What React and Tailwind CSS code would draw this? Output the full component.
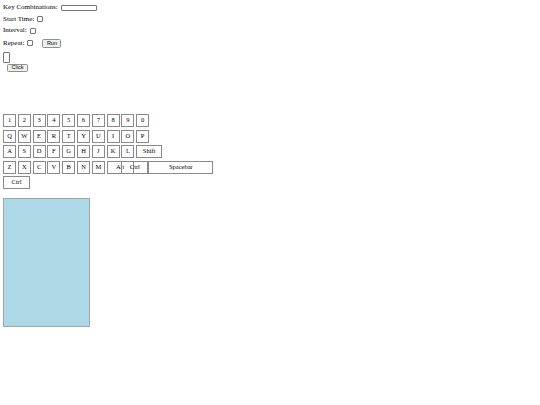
import React from "react";

const serif = { fontFamily: '"Liberation Serif", "Times New Roman", serif' };

function Key({ label, w = "w-[13px]", extra = "", bg = "bg-white" }) {
  return (
    <div
      className={`h-[13px] ${w} ${extra} ${bg} shrink-0 border border-[#8a8a8a] flex items-center justify-center text-[6.5px] text-black leading-none`}
    >
      {label}
    </div>
  );
}

function Row({ children }) {
  return <div className="flex gap-[1.8px]">{children}</div>;
}

function Check() {
  return <div className="w-[6px] h-[6px] border border-[#767676] rounded-[1px] bg-white" />;
}

function Btn({ children, extra = "" }) {
  return (
    <div
      className={`h-[8.5px] px-[3.5px] border border-[#8f8f8f] rounded-[1.5px] bg-[#efefef] flex items-center text-[5.5px] leading-none text-black ${extra}`}
      style={{ fontFamily: '"Liberation Sans", Arial, sans-serif' }}
    >
      {children}
    </div>
  );
}

export default function App() {
  return (
    <div className="w-[540px] h-[405px] bg-white text-black text-[7px] leading-none" style={serif}>
      <div className="pl-[3px] pt-[4px] flex flex-col">
        <div className="h-[7px] flex items-center gap-[3px]">
          <span>Key Combinations:</span>
          <div className="w-[36px] h-[6px] border border-[#767676] rounded-[1px] bg-white" />
        </div>
        <div className="h-[7px] mt-[4.5px] flex items-center gap-[3px]">
          <span>Start Time:</span>
          <Check />
        </div>
        <div className="h-[7px] mt-[4.5px] flex items-center gap-[3px]">
          <span>Interval:</span>
          <Check />
        </div>
        <div className="h-[8.5px] mt-[5px] flex items-center gap-[3px]">
          <span>Repeat:</span>
          <Check />
          <Btn extra="ml-[6px]">Run</Btn>
        </div>
        <div className="mt-[4px] w-[7px] h-[11px] border border-[#767676] rounded-[1px] bg-white" />
        <div className="mt-[1px] ml-[4px] flex">
          <Btn>Click</Btn>
        </div>

        <div className="mt-[42px] flex flex-col gap-[2.5px]">
          <Row>
            {["1", "2", "3", "4", "5", "6", "7", "8", "9", "0"].map((k) => (
              <Key key={k} label={k} />
            ))}
          </Row>
          <Row>
            {["Q", "W", "E", "R", "T", "Y", "U", "I", "O", "P"].map((k) => (
              <Key key={k} label={k} />
            ))}
          </Row>
          <Row>
            {["A", "S", "D", "F", "G", "H", "J", "K", "L"].map((k) => (
              <Key key={k} label={k} />
            ))}
            <Key label="Shift" w="w-[26px]" />
          </Row>
          <Row>
            {["Z", "X", "C", "V", "B", "N", "M"].map((k) => (
              <Key key={k} label={k} />
            ))}
            <Key label="Alt" w="w-[27px]" bg="bg-transparent" />
            <Key label="Ctrl" w="w-[27px]" extra="-ml-[14px]" bg="bg-transparent" />
            <Key label="Spacebar" w="w-[65px]" extra="-ml-[1.8px]" />
          </Row>
          <Row>
            <Key label="Ctrl" w="w-[27px]" />
          </Row>
        </div>

        <div className="mt-[9px] w-[87px] h-[129px] bg-[#add8e6] border border-[#9aa9ad]" />
      </div>
    </div>
  );
}
